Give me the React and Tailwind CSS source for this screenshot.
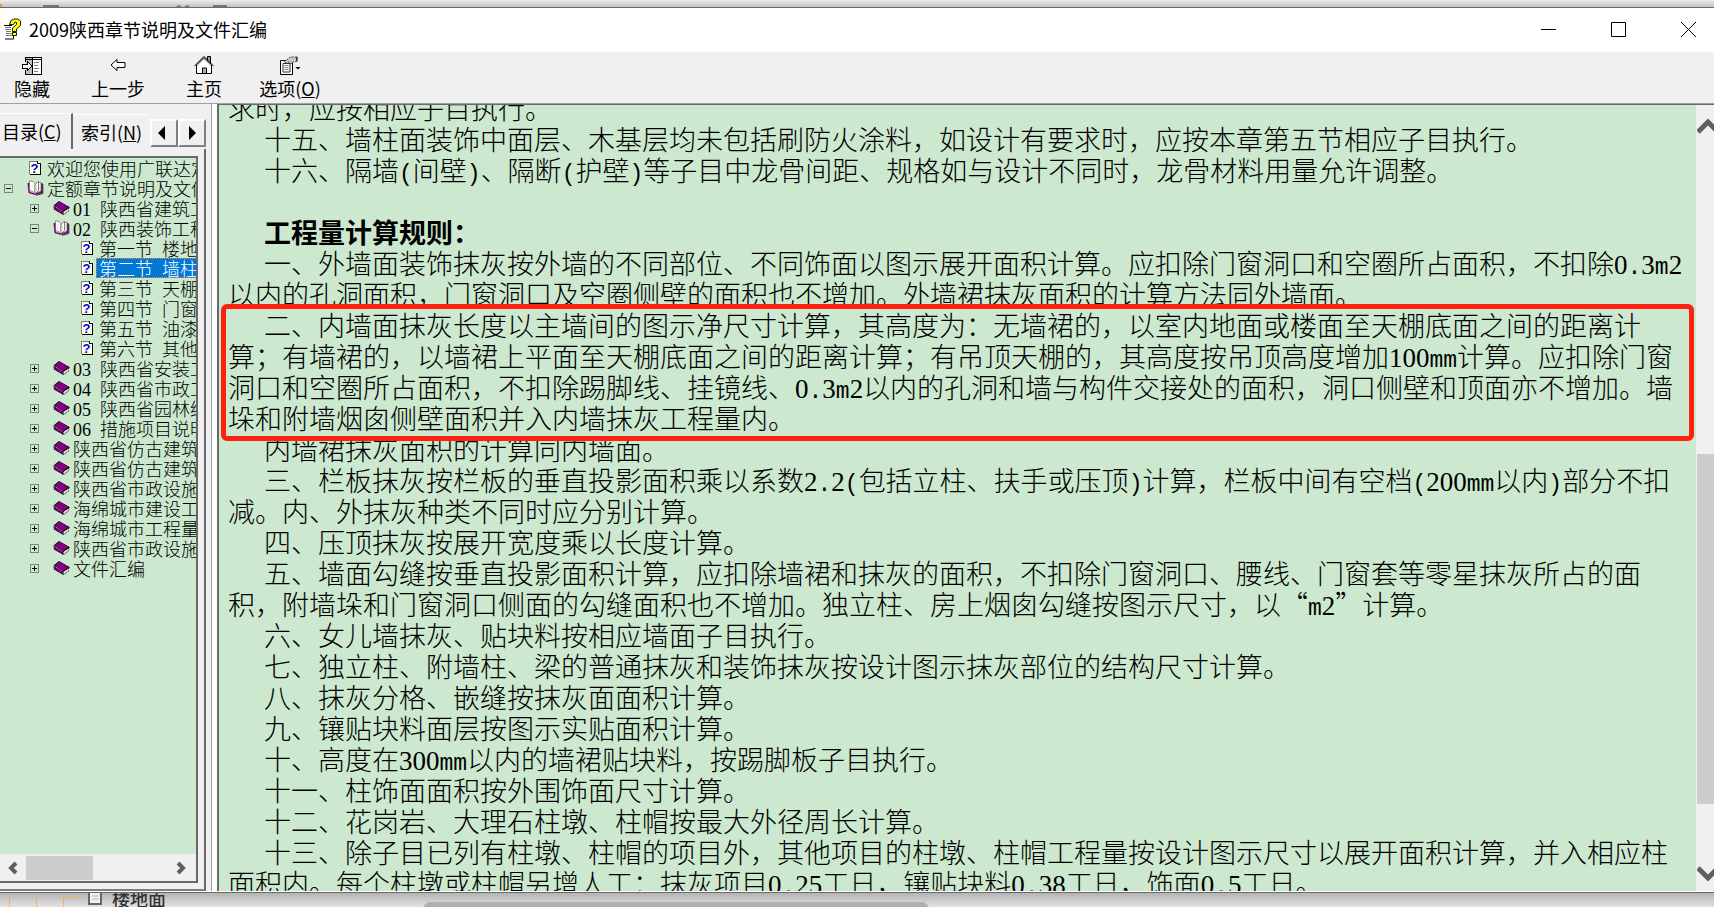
import React, { useState } from 'react';
import clsx from 'clsx';

const TREE = [
  { level: 0, icon: 'page', label: '欢迎您使用广联达定' },
  { level: 0, icon: 'open', expander: 'minus', label: '定额章节说明及文件' },
  { level: 1, icon: 'book', expander: 'plus', label: '01 陕西省建筑工' },
  { level: 1, icon: 'open', expander: 'minus', label: '02 陕西装饰工程' },
  { level: 2, icon: 'page', label: '第一节 楼地' },
  { level: 2, icon: 'page', label: '第二节 墙柱' },
  { level: 2, icon: 'page', label: '第三节 天棚' },
  { level: 2, icon: 'page', label: '第四节 门窗' },
  { level: 2, icon: 'page', label: '第五节 油漆' },
  { level: 2, icon: 'page', label: '第六节 其他' },
  { level: 1, icon: 'book', expander: 'plus', label: '03 陕西省安装工' },
  { level: 1, icon: 'book', expander: 'plus', label: '04 陕西省市政工' },
  { level: 1, icon: 'book', expander: 'plus', label: '05 陕西省园林绿' },
  { level: 1, icon: 'book', expander: 'plus', label: '06 措施项目说明' },
  { level: 1, icon: 'book', expander: 'plus', label: '陕西省仿古建筑' },
  { level: 1, icon: 'book', expander: 'plus', label: '陕西省仿古建筑' },
  { level: 1, icon: 'book', expander: 'plus', label: '陕西省市政设施' },
  { level: 1, icon: 'book', expander: 'plus', label: '海绵城市建设工' },
  { level: 1, icon: 'book', expander: 'plus', label: '海绵城市工程量' },
  { level: 1, icon: 'book', expander: 'plus', label: '陕西省市政设施' },
  { level: 1, icon: 'book', expander: 'plus', label: '文件汇编' },
];

const MARKED = [
  '二、内墙面抹灰长度以主墙间的图示净尺寸计算，其高度为：无墙裙的，以室内地面或楼面至天棚底面之间的距离计',
  '算；有墙裙的，以墙裙上平面至天棚底面之间的距离计算；有吊顶天棚的，其高度按吊顶高度增加100mm计算。应扣除门窗',
  '洞口和空圈所占面积，不扣除踢脚线、挂镜线、0.3m2以内的孔洞和墙与构件交接处的面积，洞口侧壁和顶面亦不增加。墙',
  '垛和附墙烟囱侧壁面积并入内墙抹灰工程量内。',
];

const AFTER = [
  ['内墙裙抹灰面积的计算同内墙面。'],
  ['三、栏板抹灰按栏板的垂直投影面积乘以系数2.2(包括立柱、扶手或压顶)计算，栏板中间有空档(200mm以内)部分不扣', '减。内、外抹灰种类不同时应分别计算。'],
  ['四、压顶抹灰按展开宽度乘以长度计算。'],
  ['五、墙面勾缝按垂直投影面积计算，应扣除墙裙和抹灰的面积，不扣除门窗洞口、腰线、门窗套等零星抹灰所占的面', '积，附墙垛和门窗洞口侧面的勾缝面积也不增加。独立柱、房上烟囱勾缝按图示尺寸，以“m2”计算。'],
  ['六、女儿墙抹灰、贴块料按相应墙面子目执行。'],
  ['七、独立柱、附墙柱、梁的普通抹灰和装饰抹灰按设计图示抹灰部位的结构尺寸计算。'],
  ['八、抹灰分格、嵌缝按抹灰面面积计算。'],
  ['九、镶贴块料面层按图示实贴面积计算。'],
  ['十、高度在300mm以内的墙裙贴块料，按踢脚板子目执行。'],
  ['十一、柱饰面面积按外围饰面尺寸计算。'],
  ['十二、花岗岩、大理石柱墩、柱帽按最大外径周长计算。'],
  ['十三、除子目已列有柱墩、柱帽的项目外，其他项目的柱墩、柱帽工程量按设计图示尺寸以展开面积计算，并入相应柱', '面积内。每个柱墩或柱帽另增人工：抹灰项目0.25工日，镶贴块料0.38工日，饰面0.5工日。'],
];

// Digits and the remaining Latin use faces whose advance is half a CJK cell
const Mixed = ({ text, small }) =>
  text.split(/(\d+|[^\d\u0080-\uffff]+)/).map((part, i) => {
    if (i % 2 === 0) return part;
    if (/\d/.test(part)) return <span key={i} className="font-['Liberation_Serif'] leading-[0]">{part}</span>;
    return <span key={i} className={clsx("font-['Liberation_Mono'] leading-[0]", small ? 'text-[15px]' : 'text-[23px]')}>{part}</span>;
  });

const Para = ({ lines }) => (
  <p className="indent-9">
    {lines.map((line, i) => (
      <React.Fragment key={i}>
        {i > 0 && <br />}
        <Mixed text={line} />
      </React.Fragment>
    ))}
  </p>
);

const PageIcon = () => (
  <svg width="14" height="16" viewBox="0 0 14 16" shapeRendering="crispEdges">
    <path d="M2 3h11v12H2z" fill="#000" />
    <path d="M1 1h9l2 2v11H1z" fill="#fff" />
    <path d="M1.500 14V1.500h8" fill="none" stroke="#808080" />
    <path d="M3 3.500h1M3 6.500h1M3 9.500h1M3 12.500h1M10 6.500h1M10 9.500h1M10 12.500h1M5 13.500h1M8 13.500h1M8 2.500h1M5 2.500h1" stroke="#ff0" />
    <path d="M9.500 1v2.500H12" fill="none" stroke="#000" />
    <text x="6.500" y="12.500" textAnchor="middle" fontFamily="Liberation Sans" fontSize="13" fontWeight="bold" fill="#0000e0">?</text>
  </svg>
);

const BookIcon = () => (
  <svg width="17" height="16" viewBox="0 0 17 16">
    <path d="M.5 5.500L6 1l10.500 6v1l-1 1 .5 2-5.500 4L1 9.500z" fill="#000" />
    <path d="M1.500 5.500L6.500 1.500l9 5.500-5 4z" fill="#800080" />
    <path d="M1.500 6.500l8 5v2.500L1.500 9z" fill="#800080" />
    <path d="M10.500 12l5-3.500v2.500l-5 3.500z" fill="#fff" />
    <path d="M1 6l9 5.500" stroke="#e8d0e8" strokeWidth=".8" strokeDasharray="1.500 1" />
    <path d="M11 13.500l4.500-3.500" stroke="#888" strokeWidth=".6" />
  </svg>
);

const OpenBookIcon = () => (
  <svg width="17" height="16" viewBox="0 0 17 16">
    <path d="M.5 3H3v9l5 1.500V15L1.500 13z" fill="#800080" />
    <path d="M13 3h2.500v10l-6 1.500-1.500.5v-2l5-1z" fill="#800080" />
    <path d="M15.800 4v9.500L9 15.300" fill="none" stroke="#000" strokeWidth=".8" />
    <path d="M2.500 1C5.500 1 7.500 2 8 4v10c-1-2-3-3-5.500-3.500z" fill="#fff" stroke="#606060" strokeWidth=".7" />
    <path d="M8 5l3.500-4v9.500L8 14z" fill="#fff" stroke="#606060" strokeWidth=".7" />
    <path d="M11.500 2.500H14V11l-5 2 2.500-2.500z" fill="#fff" stroke="#606060" strokeWidth=".7" />
    <path d="M9.500 6v5M12.700 4.500v5M5 4v6" stroke="#cc3" strokeWidth=".7" strokeDasharray="1 1" />
  </svg>
);

const TREE_ICONS = { page: PageIcon, book: BookIcon, open: OpenBookIcon };

const Expander = ({ kind }) => (
  <svg width="9" height="9" viewBox="0 0 9 9" shapeRendering="crispEdges">
    <path d="M.5.5h8v8h-8z" fill="none" stroke="#808080" />
    <path d="M2 4.500h5" stroke="#000" />
    {kind === 'plus' && <path d="M4.500 2v5" stroke="#000" />}
  </svg>
);

const AppIcon = () => (
  <svg width="18" height="22" viewBox="0 0 18 22">
    <path d="M0 7h9v14H0z" fill="#fff" />
    <path d="M0 7.500h8M9.500 13v8H1" fill="none" stroke="#000" />
    <path d="M1 9.500h6M1 11.500h6M2 13.500h5M2 15.500h6M2 17.500h6" stroke="#777" />
    <path d="M5.500 6.500L7 2.500 10 1h4l2.500 2v4.500L12.500 11v2.500h-4V10l4-3.500V4.500L11 4 9.500 6.500z" fill="#ff0" stroke="#000" strokeWidth=".9" />
    <path d="M8.500 14.500h4v3h-4z" fill="#ff0" stroke="#000" strokeWidth=".9" />
  </svg>
);

const HideIcon = () => (
  <svg width="20" height="19" viewBox="0 0 20 19" shapeRendering="crispEdges">
    <path d="M4 1h6v17H4z" fill="#c0c0c0" />
    <path d="M10 1h9v17h-9z" fill="#fff" />
    <path d="M3.500 6V1h16v17h-16V14M10.500 1v17M3 3.500h16" fill="none" stroke="#000" />
    <path d="M12 6.500h5M12 9.500h4M12 12.500h5M12 15.500h4" stroke="#808080" />
    <path d="M.5 8v4H5v3l5-5-5-5v3z" fill="#fff" stroke="#000" />
  </svg>
);

const BackIcon = () => (
  <svg width="16" height="14" viewBox="0 0 16 14">
    <path d="M1 7l6-5.500v3h8v5H7v3z" fill="#fff" stroke="#000" />
  </svg>
);

const HomeIcon = () => (
  <svg width="20" height="20" viewBox="0 0 20 20">
    <path d="M13.500 6V1.500h3V9" fill="#999" stroke="#000" />
    <path d="M2.500 10v8.500h15V10L10 2.500z" fill="#fff" stroke="#000" />
    <path d="M.5 11L10 1.500l9.500 9.500" fill="none" stroke="#000" />
    <path d="M3 10.500L10 4l7 6.500" fill="none" stroke="#aaa" />
    <path d="M8.500 18v-5h4v5" fill="#b0b0b0" stroke="#000" />
  </svg>
);

const OptionsIcon = () => (
  <svg width="21" height="19" viewBox="0 0 21 19">
    <path d="M.5 4.500h12v14H.5z" fill="#fff" stroke="#000" />
    <path d="M3 7.500h7v8.500H3z" fill="#fff" stroke="#333" />
    <path d="M4.500 9.500h4M4.500 11.500h4M4.500 13.500h4" stroke="#808080" />
    <path d="M4 5.500L8 3l2-2h6.500v4.500L13 6l-2 2-1.500-2L6 7z" fill="#c8c8c8" stroke="#333" strokeWidth=".9" strokeDasharray="2 1" />
    <path d="M17 .5v5" stroke="#000" />
    <path d="M15.500 11h5L18 13.500z" fill="#000" />
  </svg>
);

const Chevron = ({ d, wide }) => (
  <svg width={wide ? 22 : 20} height="20" viewBox={wide ? '0 0 22 20' : '0 0 20 20'}>
    <path d={d} fill="none" stroke="#606060" strokeWidth={wide ? 5 : 4} />
  </svg>
);

const ToolButton = ({ icon, children }) => (
  <button type="button" className="flex w-[86px] flex-col items-center pt-[3px]">
    <span className="flex h-5 items-center">{icon}</span>
    <span className="text-lg leading-[26px]">{children}</span>
  </button>
);

const TreeRow = ({ item, selected, onSelect }) => {
  const Icon = TREE_ICONS[item.icon];
  return (
    <li className={clsx('flex h-5 items-center whitespace-nowrap', item.level === 1 && 'pl-[26px]', item.level === 2 && 'pl-[52px]')}>
      <span className="w-[26px] shrink-0 pl-1">{item.expander && <Expander kind={item.expander} />}</span>
      <span className="flex w-[18px] shrink-0 justify-center"><Icon /></span>
      <button
        type="button"
        onClick={onSelect}
        className={clsx('h-5 px-[3px] text-lg leading-5', selected && 'bg-[#0078d7] text-white outline-1 -outline-offset-1 outline-dotted outline-[#ff8728]')}
      >
        <Mixed text={item.label} small />
      </button>
    </li>
  );
};

const Sidebar = () => {
  const [current, setCurrent] = useState(5);

  return (
    <aside className="flex w-[206px] shrink-0 flex-col overflow-hidden pt-[9px]">
      <div className="flex h-9 shrink-0 text-lg">
        <button type="button" className="w-[73px] border-t border-r-2 border-white border-r-[#696969] pl-[2px] pb-[2px] text-left whitespace-nowrap">
          目录(<u>C</u>)
        </button>
        <button type="button" className="mt-px w-[77px] border-t border-white pl-2 text-left whitespace-nowrap">
          索引(<u>N</u>)
        </button>
        <div className="mt-[6px] flex h-7">
          {['M15 7v14l-7-7z', 'M11 7v14l7-7z'].map((d, i) => (
            <button key={d} type="button" aria-label={i ? '向右' : '向左'} className="w-7 border-2 border-white border-r-[#808080] border-b-[#808080]">
              <svg width="28" height="28" viewBox="0 0 28 28" className="-m-[2px]"><path d={d} /></svg>
            </button>
          ))}
        </div>
      </div>

      <div className="flex min-h-0 flex-1 flex-col border-r-2 border-b-2 border-r-[#696969] border-b-[#808080] pt-[7px] pr-[6px] pb-[6px]">
        <div className="flex min-h-0 flex-1 flex-col border-t-2 border-r-2 border-b-2 border-[#696969] bg-[#cce8cf]">
          <ul className="min-h-0 flex-1 overflow-hidden font-light">
            {TREE.map((item, i) => (
              <TreeRow key={i} item={item} selected={i === current} onSelect={() => setCurrent(i)} />
            ))}
          </ul>
          <div className="flex h-[27px] shrink-0 items-center bg-[#f0f0f0]">
            <button type="button" aria-label="向左滚动" className="flex w-[26px] justify-center"><Chevron d="M13 5l-5 5 5 5" /></button>
            <span className="h-6 w-[67px] bg-[#cdcdcd]" />
            <button type="button" aria-label="向右滚动" className="ml-auto flex w-[26px] justify-center"><Chevron d="M5 5l5 5-5 5" /></button>
          </div>
        </div>
      </div>
    </aside>
  );
};

const Article = () => (
  <main className="min-w-0 flex-1 overflow-hidden bg-[#cce8cf] pl-[9px] text-[27px] leading-[31px] font-light whitespace-nowrap">
    <div className="-mt-[13px]">
      <p>求时，应按相应子目执行。</p>
      <Para lines={['十五、墙柱面装饰中面层、木基层均未包括刷防火涂料，如设计有要求时，应按本章第五节相应子目执行。']} />
      <Para lines={['十六、隔墙(间壁)、隔断(护壁)等子目中龙骨间距、规格如与设计不同时，龙骨材料用量允许调整。']} />
      <h1 className="mt-[31px] indent-9 font-bold">工程量计算规则：</h1>
      <Para
        lines={[
          '一、外墙面装饰抹灰按外墙的不同部位、不同饰面以图示展开面积计算。应扣除门窗洞口和空圈所占面积，不扣除0.3m2',
          '以内的孔洞面积，门窗洞口及空圈侧壁的面积也不增加。外墙裙抹灰面积的计算方法同外墙面。',
        ]}
      />
      <div className="relative">
        <Para lines={MARKED} />
        <div className="pointer-events-none absolute -top-[5px] right-[2px] -bottom-2 -left-[7px] rounded-md border-5 border-[#ff2010]" />
      </div>
      {AFTER.map((lines, i) => <Para key={i} lines={lines} />)}
    </div>
  </main>
);

export default function App() {
  return (
    <div lang="zh-CN" className="flex h-screen flex-col overflow-hidden bg-[#d6d6d6] font-['Noto_Sans_CJK_SC',sans-serif] text-black">
      {/* Slice of the window behind */}
      <div className="h-[7px] shrink-0 bg-linear-to-b from-[#ececec] to-[#c4c4c4]">
        <svg width="260" height="7" viewBox="0 0 260 7" fill="none" stroke="#777" strokeWidth="2">
          <path d="M0 4v3" stroke="#f0962d" strokeWidth="4" />
          <path d="M44 7V6h14v1M177 6l4 1M189 6l-4 1M214 7V6h12v1" />
        </svg>
      </div>

      <div className="flex min-h-0 flex-1 flex-col overflow-hidden border-t border-b border-[#696969] bg-[#f0f0f0]">
        <header className="flex h-11 shrink-0 items-center bg-white pb-[2px] pl-1">
          <AppIcon />
          <h2 className="ml-[7px] text-lg">2009陕西章节说明及文件汇编</h2>
          <div className="-mr-[9px] ml-auto flex h-full">
            {[['最小化', 'M0 7.500h15'], ['最大化', 'M.5.5h14v14H.5z'], ['关闭', 'M0 0l15 15M15 0L0 15']].map(([name, d]) => (
              <button key={name} type="button" aria-label={name} className="flex w-[70px] items-center justify-center">
                <svg width="15" height="15" viewBox="0 0 15 15" fill="none" stroke="#000"><path d={d} /></svg>
              </button>
            ))}
          </div>
        </header>

        <nav className="-ml-[11px] flex h-[51px] shrink-0">
          <ToolButton icon={<HideIcon />}>隐藏</ToolButton>
          <ToolButton icon={<BackIcon />}>上一步</ToolButton>
          <ToolButton icon={<HomeIcon />}>主页</ToolButton>
          <ToolButton icon={<OptionsIcon />}>选项(<u>O</u>)</ToolButton>
        </nav>

        <div className="flex min-h-0 flex-1 border-t border-b border-[#a0a0a0] border-b-white">
          <Sidebar />
          <div className="ml-[5px] w-[6px] shrink-0 border-l border-[#a0a0a0] bg-white" />
          <div className="flex min-w-0 flex-1 border-t border-l-2 border-[#696969]">
            <Article />
            <div className="flex w-[18px] shrink-0 flex-col overflow-hidden bg-[#f0f0f0] pl-px">
              <button type="button" aria-label="向上滚动" className="h-[27px] shrink-0 pt-3">
                <Chevron wide d="M1 15L11 5l10 10" />
              </button>
              <div className="flex min-h-0 flex-1 flex-col">
                <span className="flex-[322]" />
                <span className="flex-[349] bg-[#cdcdcd]" />
                <span className="flex-[55]" />
              </div>
              <button type="button" aria-label="向下滚动" className="h-[32px] shrink-0">
                <Chevron wide d="M1 3l10 10L21 3" />
              </button>
            </div>
          </div>
        </div>
      </div>

      <div className="flex h-[14px] shrink-0 overflow-hidden bg-linear-to-b from-[#b4b4b4] to-[#e2e2e2] text-lg leading-[14px] font-medium text-[#333]">
        <svg width="108" height="14" viewBox="0 0 108 14" fill="none" stroke="#f0b060">
          <path d="M9.500 0v14M36.500 0v14M63.500 0v14M64 4.500h18" />
          <path d="M89 0v11h12V0" fill="#f0f0f0" stroke="#666" strokeWidth="2" />
          <path d="M92 3h7M92 6h7" stroke="#bbb" />
        </svg>
        <span className="-mt-[2px] ml-1 w-[311px]">楼地面</span>
        <div className="mt-[9px] h-5 w-[506px] rounded-lg bg-[#b0b0b0]" />
      </div>
    </div>
  );
}
